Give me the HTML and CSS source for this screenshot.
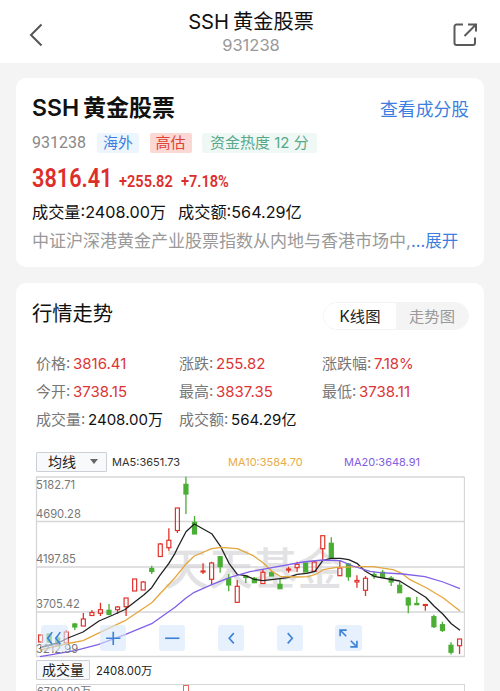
FILE: index.html
```html
<!DOCTYPE html>
<html lang="zh-CN">
<head>
    <meta charset="UTF-8">
    <meta name="viewport" content="width=device-width, initial-scale=1.0">
    <title>SSH黄金股票</title>
    <link rel="stylesheet" href="styles.css">
</head>
<body>
    <!-- 顶部导航 -->
    <header class="navbar">
        <button class="nav-button" aria-label="返回">
            <svg width="24" height="24" viewBox="0 0 24 24"><path d="M17.5 1.5L7 12l10.500 10.500" fill="none" stroke="#555" stroke-width="2"/></svg>
        </button>
        <div class="nav-title">
            <h1 class="nav-name">SSH<span class="cjk-gap">黄金股票</span></h1>
            <div class="nav-code">931238</div>
        </div>
        <button class="nav-button" aria-label="分享">
            <svg width="26" height="26" viewBox="0 0 26 26"><path d="M11 2.500H4.500a2 2 0 0 0-2 2V21a2 2 0 0 0 2 2H21a2 2 0 0 0 2-2v-5.500M12.500 14L24 2.500M16 2.500h8v7" fill="none" stroke="#5a5a5a" stroke-width="2"/></svg>
        </button>
    </header>

    <!-- 指数概况 -->
    <section class="card summary">
        <div class="summary-header">
            <h2 class="summary-name">SSH<span class="cjk-gap">黄金股票</span></h2>
            <a class="link">查看成分股</a>
        </div>
        <div class="tags">
            <span class="code">931238</span>
            <span class="tag blue">海外</span>
            <span class="tag red">高估</span>
            <span class="tag green">资金热度 12 分</span>
        </div>
        <div class="price-row">
            <span class="price">3816.41</span>
            <span class="change">+255.82</span>
            <span class="change">+7.18%</span>
        </div>
        <div class="volume-row">
            <span>成交量:2408.00万</span>
            <span>成交额:564.29亿</span>
        </div>
        <p class="desc">中证沪深港黄金产业股票指数从内地与香港市场中,<a class="expand">...展开</a></p>
    </section>

    <!-- 行情走势 -->
    <section class="card trend">
        <div class="trend-header">
            <h2 class="trend-title">行情走势</h2>
            <div class="tabs">
                <button class="tab active">K线图</button>
                <button class="tab">走势图</button>
            </div>
        </div>

        <div class="quote-grid">
            <div>价格: <span class="up">3816.41</span></div>
            <div>涨跌: <span class="up">255.82</span></div>
            <div>涨跌幅: <span class="up">7.18%</span></div>
            <div>今开: <span class="up">3738.15</span></div>
            <div>最高: <span class="up">3837.35</span></div>
            <div>最低: <span class="up">3738.11</span></div>
            <div>成交量: <span class="flat">2408.00万</span></div>
            <div>成交额: <span class="flat">564.29亿</span></div>
        </div>

        <div class="ma-row">
            <button class="select">均线<i class="arrow"></i></button>
            <span class="ma ma5">MA5:3651.73</span>
            <span class="ma ma10">MA10:3584.70</span>
            <span class="ma ma20">MA20:3648.91</span>
        </div>

        <div class="chart">
            <svg id="kline" width="430" height="182" viewBox="35 476 430 182"></svg>
            <div class="toolbar">
                <button class="tool"><svg viewBox="0 0 26 26"><path d="M11 7l-4.500 6 4.500 6M19 7l-4.500 6 4.500 6"/></svg></button>
                <button class="tool"><svg viewBox="0 0 26 26"><path d="M6 13h14M13 6.500v13"/></svg></button>
                <button class="tool"><svg viewBox="0 0 26 26"><path d="M6 13h14"/></svg></button>
                <button class="tool"><svg viewBox="0 0 26 26"><path d="M15.500 8l-4.500 5 4.500 5"/></svg></button>
                <button class="tool"><svg viewBox="0 0 26 26"><path d="M10.500 8l4.500 5-4.500 5"/></svg></button>
                <button class="tool"><svg viewBox="0 0 26 26"><path d="M11.500 5H5v6M5 5l6 6M15 21.500h6.500v-6M21.500 21.500l-6-6"/></svg></button>
            </div>
        </div>

        <div class="vol-row">
            <span class="select vol-label">成交量</span>
            <span class="vol-value">2408.00万</span>
        </div>
        <div class="vol-chart">
            <span class="vol-max">6790.00万</span>
            <i class="vol-bar"></i>
        </div>
    </section>

    <script src="chart.js"></script>
</body>
</html>
```
FILE: styles.css
```css
* {
    margin: 0;
    padding: 0;
    box-sizing: border-box;
}

body {
    font-family: Inter, "Noto Sans CJK SC", sans-serif;
    background: #f4f4f4;
    color: #111;
    height: 691px;
    overflow: hidden;
}

button {
    background: none;
    border: none;
    font-family: inherit;
}

/* 顶部导航 */
.navbar {
    display: flex;
    justify-content: space-between;
    padding: 0 22px 0 24px;
    height: 63px;
    background: #fff;
}

.nav-button {
    width: 26px;
    height: 26px;
    margin-top: 22px;
}

.nav-button svg {
    display: block;
}

.nav-title {
    text-align: center;
    padding-top: 9px;
}

.nav-name {
    font-size: 20.2px;
    font-weight: 400;
    line-height: 26px;
}

.cjk-gap {
    margin-left: 4px;
}

.nav-code {
    font-size: 16.5px;
    line-height: 20px;
    color: #999;
}

/* 卡片 */
.card {
    margin: 0 16px;
    padding: 0 16px;
    background: #fff;
    border-radius: 10px;
}

.summary {
    margin-top: 15px;
    height: 189px;
    padding-top: 12px;
}

.summary-header {
    display: flex;
    justify-content: space-between;
    align-items: center;
    height: 32px;
}

.summary-name {
    font-size: 23px;
    font-weight: 600;
}

.link {
    margin: 3px -1px 0 0;
    font-size: 17.8px;
    color: #3c7fe0;
}

.tags {
    display: flex;
    align-items: center;
    height: 20px;
    margin-top: 11px;
    font-size: 15px;
    line-height: 20px;
}

.code {
    width: 65px;
    color: #888;
    font-family: Roboto, sans-serif;
    font-size: 16px;
}

.tag {
    padding: 0 6px;
    margin-right: 10.5px;
    border-radius: 2px;
}

.tag.blue {
    color: #3c7fe0;
    background: #edf5ff;
}

.tag.red {
    color: #dc4437;
    background: #fbd8d3;
}

.tag.green {
    padding: 0 8px;
    color: #55a889;
    background: #f0f8f5;
}

/* 价格用窄体数字 */
.price-row {
    display: flex;
    align-items: baseline;
    height: 34px;
    margin-top: 8px;
    color: #dc2e2a;
    font-family: Roboto, sans-serif;
    font-weight: 600;
}

.price {
    width: 87px;
    font-size: 25.5px;
    line-height: 34px;
    transform: scaleX(0.85);
    transform-origin: left;
}

.change {
    width: 62px;
    font-size: 16px;
    transform: scaleX(0.91);
    transform-origin: left;
}

.volume-row {
    display: flex;
    gap: 12px;
    height: 24px;
    margin-top: 5px;
    font-size: 16.2px;
    line-height: 24px;
}

.desc {
    margin-top: 5px;
    font-size: 17px;
    line-height: 25px;
    color: #999;
    white-space: nowrap;
}

.expand {
    color: #3c7fe0;
    font-size: 16.500px;
}

/* 行情走势 */
.trend {
    margin-top: 16px;
    height: 420px;
    padding-top: 13px;
}

.trend-header {
    display: flex;
    justify-content: space-between;
    align-items: center;
    height: 32px;
}

.trend-title {
    font-size: 20.3px;
    font-weight: 400;
}

.tabs {
    display: flex;
    width: 146px;
    height: 28px;
    margin: 7px -1px 0 0;
    border: 1px solid #f3f3f3;
    border-radius: 14px;
    overflow: hidden;
}

.tab {
    flex: 1;
    padding-bottom: 2px;
    font-size: 15.3px;
    color: #999;
    background: #f4f4f4;
}

.tab.active {
    color: #222;
    background: #fff;
}

.quote-grid {
    display: grid;
    grid-template-columns: 143px 143px 1fr;
    grid-auto-rows: 28.3px;
    margin: 21.500px 0 0 4px;
    font-size: 15px;
    line-height: 28px;
    word-spacing: -1.5px;
    color: #777;
    white-space: nowrap;
}

.up {
    color: #dc3535;
}

.flat {
    color: #111;
}

.ma-row {
    display: flex;
    align-items: center;
    height: 20px;
    margin: 17.500px 0 0 4px;
}

.select {
    display: flex;
    align-items: center;
    justify-content: center;
    gap: 14px;
    width: 71px;
    height: 20px;
    padding-left: 3px;
    font-size: 14px;
    line-height: 18px;
    color: #222;
    background: #f8f9fb;
    border: 1px solid #ccd0d6;
    border-radius: 1px;
}

.arrow {
    border: 4px solid transparent;
    border-top: 5px solid #666;
    border-bottom: 0;
}

.ma {
    font-size: 11px;
}

.ma5 {
    width: 116px;
    margin-left: 5px;
    color: #333;
}

.ma10 {
    width: 116px;
    color: #e8ab45;
}

.ma20 {
    color: #8060e0;
}

/* K线图 */
.chart {
    position: relative;
    height: 182px;
    margin: 4px 0 0 3px;
}

#kline {
    display: block;
}

.grid-line {
    stroke: #d6d6d9;
    stroke-width: 1.3;
}

.watermark {
    font-size: 44.500px;
    font-weight: 500;
    fill: #e2e2e4;
}

.axis-label {
    font-size: 11.2px;
    fill: #777;
}

.toolbar {
    position: absolute;
    left: 6px;
    top: 149px;
    display: flex;
    gap: 32.4px;
}

.tool {
    width: 26.500px;
    height: 26.500px;
    border-radius: 3px;
    background: rgba(215, 232, 252, 0.6);
}

.tool svg {
    display: block;
    fill: none;
    stroke: #3c82d8;
    stroke-width: 1.6;
}

/* 成交量 */
.vol-row {
    display: flex;
    align-items: center;
    gap: 6px;
    height: 20px;
    margin: 2px 0 0 4px;
}

.vol-label {
    width: 54px;
    padding-left: 0;
}

.vol-value {
    font-size: 11.3px;
    color: #222;
}

.vol-chart {
    display: flex;
    width: 429px;
    height: 40px;
    margin: 4px 0 0 4px;
    border: 1px solid #d6d6d9;
}

.vol-max {
    width: 146px;
    font-size: 11px;
    line-height: 13px;
    color: #777;
}

.vol-bar {
    width: 6px;
    height: 40px;
    border: 1px solid #e46a60;
}
```
FILE: chart.js
```js
const svg = document.getElementById('kline');
const NS = 'http://www.w3.org/2000/svg';
const RED = '#e0322b';
const GREEN = '#4aae34';

function draw(tag, attrs, text) {
    const el = document.createElementNS(NS, tag);
    for (const key in attrs) el.setAttribute(key, attrs[key]);
    if (text) el.textContent = text;
    svg.appendChild(el);
}

// [涨跌, 上影线, 实体顶, 实体底, 下影线]
const candles = [
    [1, 635, 635, 642, 642], [0, 634, 634, 642, 643], [0, 636, 638, 643, 643], [1, 630, 632, 643, 643],
    [0, 623, 624, 627, 630], [1, 613, 619, 626, 626], [1, 610, 612.5, 615.5, 616], [1, 602.7, 609.7, 613.3, 616],
    [0, 604, 610.3, 614.3, 615.3], [1, 606, 607, 609.7, 614], [1, 598, 598, 606.7, 616], [1, 579, 579, 591, 591],
    [1, 581, 582, 590, 590], [0, 565.7, 568.5, 571.5, 574], [1, 543, 544, 556.5, 557], [1, 528.3, 540.3, 547.7, 550.7],
    [1, 508, 508, 530.5, 533], [0, 476.7, 484.3, 494, 514], [0, 516, 522.3, 534, 534], [1, 563.3, 571, 572, 574],
    [1, 561.7, 563, 579.3, 585], [0, 556, 556.7, 566.7, 572.7], [0, 574, 578.7, 585, 591.3], [1, 580, 586.3, 602.3, 603],
    [0, 576, 576, 577.5, 583], [0, 577, 578.3, 582.7, 583], [1, 569, 572.3, 583.5, 584], [0, 570, 572.7, 576, 576],
    [0, 579.3, 584.3, 588.7, 589], [1, 566.7, 569, 570, 572.7], [1, 561.7, 564.3, 567.7, 572], [0, 563, 563, 572, 572],
    [1, 561, 562, 571.3, 571.3], [1, 535.7, 535.7, 548.7, 560], [0, 537.3, 543.3, 558, 558], [1, 560, 568, 575.7, 576],
    [0, 563, 564, 576.7, 580.7], [1, 575.3, 580.5, 582, 587.7], [1, 576, 578.3, 590.3, 596], [0, 571.7, 574.5, 576, 579],
    [0, 570, 572.3, 577.3, 578], [0, 576, 578, 582, 586], [0, 582, 585.3, 592.7, 593], [0, 597, 598, 605, 613.3],
    [0, 596.7, 603.5, 604.7, 604.7], [1, 604.3, 604.5, 605.5, 610.7], [0, 614.7, 616.7, 626.7, 628], [0, 621.7, 624.7, 630.3, 632],
    [0, 642.3, 645.3, 652.3, 654.5], [1, 639, 639, 645.7, 654]
];

const lines = {
    '#222': '40,647.5 58,643 68,638 83,632 99,621 113,615 125,609.5 144,594.7 151.7,587.7 159.7,575.7 168.7,563.7 175,553.3 178,547 186,531.7 194.3,524 211.7,533.7 220.7,546.7 229,563.3 237.3,574.3 245.7,575.7 254.3,579.3 263,580.7 280,578.7 287.7,577.7 297,574.3 306.7,573.3 315,571.3 322.7,560.7 331,558.3 340.3,558.3 348.7,559.7 357,563.3 365,571 374,576.3 399.7,581 425.7,597.3 434,606 443,614.3 451.3,623.7 460,630.3',
    '#e5a63c': '40,650 68,643.5 83,640.7 101.7,631.7 125,620.7 151.7,602.7 175,577.7 186,564 194.3,556 211.7,548.7 220.7,547.3 237.3,548.7 253.3,555.7 263,562.7 271.7,571 280,576.3 297,577 308,576.7 316.7,574 323,569.7 336.7,567.3 360,566.7 373,566.7 393,569.7 401.7,573.3 410,579.7 426.7,588 443,597.7 460,611',
    '#8060e8': '40,656.7 75,650.7 98,644.7 125,634.7 151.7,623.7 175,607.3 186,598 194.3,592.3 211.7,584.7 230,577.3 250,571.7 268,568.3 303,562 322.7,560 340,560.7 353,566 370,571.3 380,572.7 403,574 425,576.7 443,582 460,588.7'
};

draw('text', { x: 164, y: 585, class: 'watermark' }, '天天基金');

// 网格线
[477, 521.5, 567, 612, 656.5].forEach(y => draw('line', { x1: 36, x2: 464.5, y1: y, y2: y, class: 'grid-line' }));
[36.5, 464.5].forEach(x => draw('line', { x1: x, x2: x, y1: 477, y2: 657, class: 'grid-line' }));

candles.forEach(([up, high, top, bottom, low], i) => {
    const x = 40.6 + i * 8.55;
    const color = up ? RED : GREEN;
    draw('path', { d: `M${x} ${high}V${top}M${x} ${bottom}V${low}`, stroke: color, 'stroke-width': 1.3 });
    draw('rect', { x: x - 2, y: top, width: 4, height: bottom - top, fill: up ? 'none' : color, stroke: color, 'stroke-width': 1.2 });
});

for (const color in lines) {
    draw('polyline', { points: lines[color], fill: 'none', stroke: color, 'stroke-width': 1.3, 'stroke-linejoin': 'round' });
}

[['5182.71', 489], ['4690.28', 518], ['4197.85', 563], ['3705.42', 608], ['3212.99', 653]].forEach(([label, y]) => {
    draw('text', { x: 36, y, class: 'axis-label' }, label);
});
```
